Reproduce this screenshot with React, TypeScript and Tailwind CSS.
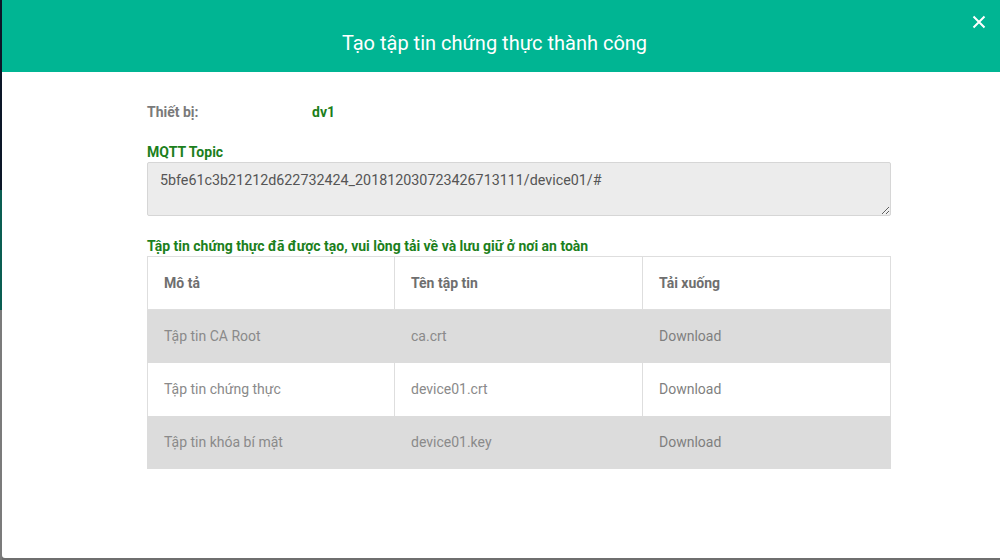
import React from 'react'

interface CertFile {
    description: string
    fileName: string
}

const files: CertFile[] = [
    { description: 'Tập tin CA Root', fileName: 'ca.crt' },
    { description: 'Tập tin chứng thực', fileName: 'device01.crt' },
    { description: 'Tập tin khóa bí mật', fileName: 'device01.key' }
]

const topic = '5bfe61c3b21212d622732424_201812030723426713111/device01/#'

const App = () => {
    return (
        <div className="flex w-[1000px] h-[560px] bg-[#6f6f6f] font-['Roboto','Liberation_Sans',sans-serif] overflow-hidden">
            {/* backdrop peeking out on the left */}
            <div className="flex flex-col w-[2px] shrink-0">
                <div className="h-[190px] bg-[#0c1628]" />
                <div className="h-[120px] bg-[#0a5e52]" />
                <div className="flex-1 bg-[#7b7b7b]" />
            </div>

            {/* Modal */}
            <div className="flex flex-col flex-1 h-[558px] bg-white rounded-bl-[3px]">
                <div className="relative flex items-center justify-center h-[72px] pr-[13px] bg-[#00b593] shrink-0">
                    <h2 className="text-[20px] text-white pt-[14px]">Tạo tập tin chứng thực thành công</h2>
                    <button className="absolute right-[13px] top-[14px] w-[16px] h-[16px] text-white">
                        <svg viewBox="0 0 16 16" className="w-[16px] h-[16px]" fill="none" stroke="currentColor" strokeWidth="2">
                            <path d="M2.5 2.5 L13.5 13.5 M13.5 2.5 L2.5 13.5" />
                        </svg>
                    </button>
                </div>

                <div className="pl-[145px] pr-[109px] pt-[31px]">
                    <div className="flex items-center h-[18px] text-[14px] font-bold">
                        <span className="w-[165px] text-[#7a7a7a]">Thiết bị:</span>
                        <span className="text-[#1c7f1c]">dv1</span>
                    </div>

                    <div className="mt-[22px] text-[14px] font-bold text-[#1c7f1c] leading-[18px]">MQTT Topic</div>
                    <textarea
                        readOnly
                        value={topic}
                        className="block w-full h-[54px] mt-[1px] px-[12px] py-[7px] bg-[#ececec] border border-[#d6d6d6] rounded-[2px] text-[14.3px] text-[#555] outline-none"
                    />

                    <div className="mt-[21px] text-[14px] font-bold text-[#1c7f1c] leading-[18px]">
                        Tập tin chứng thực đã được tạo, vui lòng tải về và lưu giữ ở nơi an toàn
                    </div>

                    <table className="w-full mt-[1px] border-collapse text-[14px]">
                        <thead>
                            <tr className="h-[53px]">
                                <th className="w-[247px] text-left pl-[16px] font-bold text-[#6f6f6f] border border-[#dedede]">Mô tả</th>
                                <th className="w-[248px] text-left pl-[16px] font-bold text-[#6f6f6f] border border-[#dedede]">Tên tập tin</th>
                                <th className="text-left pl-[16px] font-bold text-[#6f6f6f] border border-[#dedede]">Tải xuống</th>
                            </tr>
                        </thead>
                        <tbody>
                            {files.map((file, i) => (
                                <tr key={file.fileName} className={i % 2 === 0 ? 'h-[53px] bg-[#dcdcdc]' : 'h-[53px] bg-white'}>
                                    <td className={i % 2 === 0 ? 'pl-[16px] text-[#8a8a8a] border-x border-[#dcdcdc]' : 'pl-[16px] text-[#8a8a8a] border-x border-[#dedede]'}>{file.description}</td>
                                    <td className={i % 2 === 0 ? 'pl-[16px] text-[#8a8a8a] border-x border-[#dcdcdc]' : 'pl-[16px] text-[#8a8a8a] border-x border-[#dedede]'}>{file.fileName}</td>
                                    <td className={i % 2 === 0 ? 'pl-[16px] text-[#7f7f7f] border-x border-[#dcdcdc]' : 'pl-[16px] text-[#7f7f7f] border-x border-[#dedede]'}>Download</td>
                                </tr>
                            ))}
                        </tbody>
                    </table>
                </div>
            </div>
        </div>
    )
}

export default App
